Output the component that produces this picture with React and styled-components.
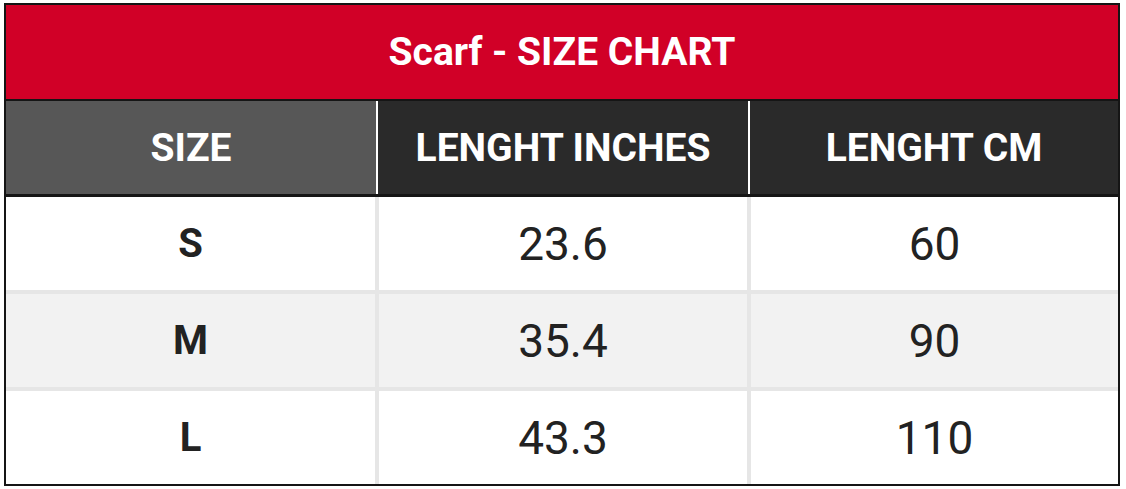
import styled, {createGlobalStyle} from "styled-components";

const GlobalStyle = createGlobalStyle`
  body {
    margin: 0;
    background: #fff;
    font-family: Roboto, "Liberation Sans", sans-serif;
  }
`

const columns = ["SIZE", "LENGHT INCHES", "LENGHT CM"];

const rows = [
    {size: "S", inches: "23.6", cm: "60"},
    {size: "M", inches: "35.4", cm: "90"},
    {size: "L", inches: "43.3", cm: "110"},
];

const App = () => {
    return <>
        <GlobalStyle/>
        <Chart>
            <Title>Scarf - SIZE CHART</Title>
            <HeadRow>
                {columns.map((c, i) => <HeadCell key={c} $first={i === 0}>{c}</HeadCell>)}
            </HeadRow>
            <Body>
                {rows.map((r, i) => [
                    <Cell key={r.size + "s"} $alt={i === 1} $label>{r.size}</Cell>,
                    <Cell key={r.size + "i"} $alt={i === 1}>{r.inches}</Cell>,
                    <Cell key={r.size + "c"} $alt={i === 1}>{r.cm}</Cell>,
                ])}
            </Body>
        </Chart>
    </>;
}

const Chart = styled.div`
  box-sizing: border-box;
  width: 1116px;
  margin: 3px 0 0 4px;
  border: 2px solid #151515;
`

const Title = styled.div`
  height: 94px;
  display: flex;
  align-items: center;
  justify-content: center;
  background: #d10027;
  color: #fff;
  font-weight: 700;
  font-size: 39px;
`

const HeadRow = styled.div`
  display: grid;
  grid-template-columns: 370px 370px 1fr;
  gap: 2px;
  height: 93px;
  background: #fff;
  border-top: 2px solid #151515;
  border-bottom: 3px solid #151515;
`

const HeadCell = styled.div`
  display: flex;
  align-items: center;
  justify-content: center;
  background: ${p => p.$first ? '#575757' : '#2a2a2a'};
  color: #fff;
  font-weight: 700;
  font-size: 39px;
`

const Body = styled.div`
  display: grid;
  grid-template-columns: 369px 368px 1fr;
  grid-auto-rows: 93px;
  gap: 4px;
  background: #e6e6e6;
`

const Cell = styled.div`
  display: flex;
  align-items: center;
  justify-content: center;
  background: ${p => p.$alt ? '#f2f2f2' : '#fff'};
  color: #222;
  font-size: ${p => p.$label ? '40px' : '46px'};
  font-weight: ${p => p.$label ? 700 : 400};
`

export default App
